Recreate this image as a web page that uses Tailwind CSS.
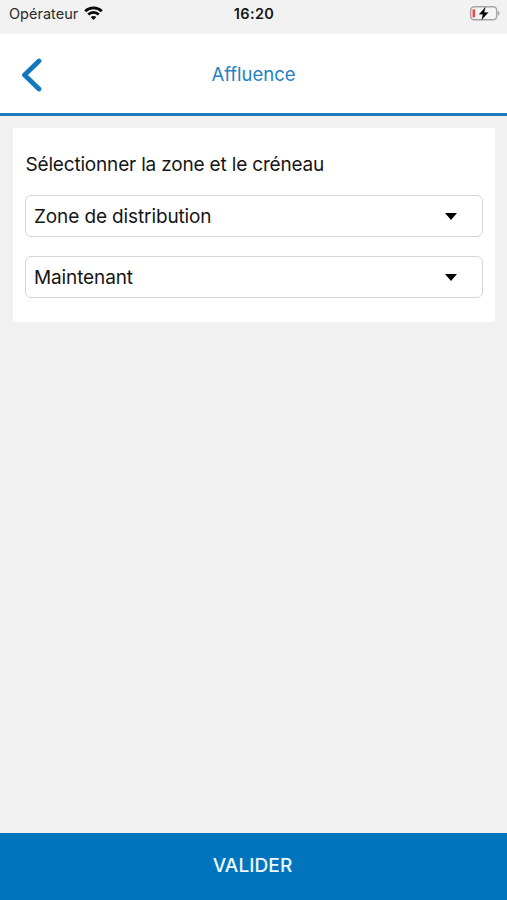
<!DOCTYPE html>
<html lang="fr">
<head>
<meta charset="utf-8">
<title>Affluence</title>
<script src="https://cdn.jsdelivr.net/npm/@tailwindcss/browser@4"></script>
</head>
<body class="flex h-[900px] w-[507px] flex-col overflow-hidden bg-[#f1f1f1] font-['Inter','Liberation_Sans',sans-serif] text-[#151515]">
  <div class="grid h-[34px] shrink-0 grid-cols-3 items-start bg-[#f2f2f2] pt-[4px] pr-[7px] pl-[9px]">
    <div class="flex h-5 items-center gap-[6px]">
      <span class="text-[14.5px] leading-5 tracking-[0.02px] text-[#2a2a2a]">Opérateur</span>
      <svg class="mb-[2px] h-[14px] w-[19px]" viewBox="0 0 19 14" fill="none" stroke="#0b0b0b" stroke-width="2.7">
        <path d="M1.2 5.3C5.8.8 13.2.8 17.8 5.3"/>
        <path d="M4.2 8.5c3-2.9 7.6-2.9 10.6 0"/>
        <path d="M6.7 11.1c1.6-1.5 4-1.5 5.6 0L9.5 13.9z" fill="#0b0b0b" stroke="none"/>
      </svg>
    </div>
    <span class="-ml-px text-center text-[14.5px] leading-5 font-semibold tracking-[0.4px]">16:20</span>
    <svg class="mt-[2px] h-[15px] w-[31px] justify-self-end" viewBox="0 0 31 15">
      <rect x="1.7" y=".8" width="26" height="13" rx="3.5" fill="#f5f5f5" stroke="#a5a5a5" stroke-width="1.5"/>
      <path d="M29 5c2 .6 2 4 0 4.6z" fill="#a5a5a5"/>
      <rect x="3.5" y="3.2" width="2.6" height="8.2" rx=".8" fill="#f0474a"/>
      <path d="M16.4 1.2L10.2 8.2h3.8l-1.3 5.6 6.4-7.2h-4z" fill="#050505" stroke="#050505" stroke-width=".3"/>
    </svg>
  </div>
  <header class="grid h-[82px] shrink-0 grid-cols-[1fr_auto_1fr] items-center border-b-[3px] border-[#1b79bc] bg-white">
    <button class="ml-[21px] w-[22px]" aria-label="Retour">
      <svg class="mt-[2px] h-[34px] w-[22px]" viewBox="0 0 22 34" fill="none" stroke="#1377bd" stroke-width="4.8" stroke-linecap="round" stroke-linejoin="round"><path d="M18 3L3.5 17 18 31"/></svg>
    </button>
    <h1 class="text-[18.5px] leading-6 text-[#2482bf]">Affluence</h1>
  </header>
  <main class="flex-1 px-[12.5px] pt-3">
    <section class="h-[194px] bg-white px-3 pt-[25px]">
      <h2 class="pl-px text-[19px] leading-6 tracking-[-0.18px]">Sélectionner la zone et le créneau</h2>
      <button class="mt-[18px] flex h-[42px] w-full items-center justify-between rounded-md border-[1.5px] border-[#d7d7d7] pr-[25px] pl-[8.5px] text-left text-[19px] tracking-[-0.12px]">
        <span class="pt-[2px]">Zone de distribution</span>
        <svg class="h-[7px] w-3" viewBox="0 0 12 7"><path d="M0 0h12L6 7z"/></svg>
      </button>
      <button class="mt-[19px] flex h-[42px] w-full items-center justify-between rounded-md border-[1.5px] border-[#d7d7d7] pr-[25px] pl-[8.5px] text-left text-[19px] tracking-[-0.12px]">
        <span class="pt-[2px]">Maintenant</span>
        <svg class="h-[7px] w-3" viewBox="0 0 12 7"><path d="M0 0h12L6 7z"/></svg>
      </button>
    </section>
  </main>
  <button class="h-[67px] shrink-0 bg-[#0075be] pr-[2px] text-[19px] font-medium tracking-[0.1px] text-[#eef9ff]">VALIDER</button>
</body>
</html>
